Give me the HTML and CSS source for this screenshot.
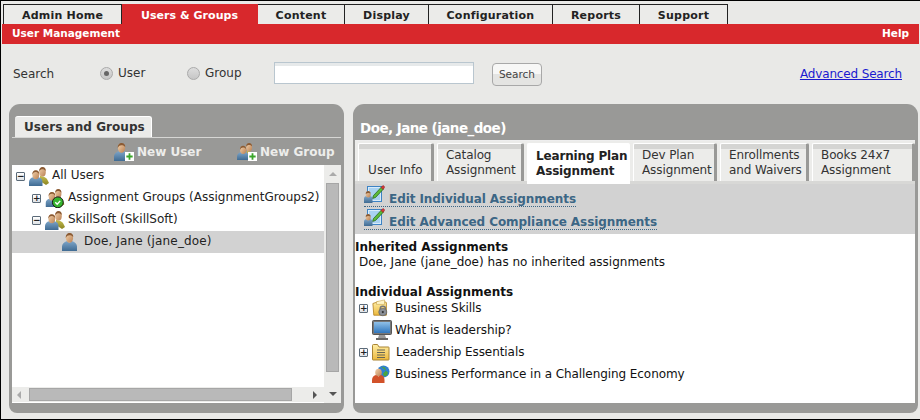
FILE: index.html
```html
<!DOCTYPE html>
<html lang="en">
<head>
<meta charset="utf-8">
<title>User Management</title>
<link rel="stylesheet" href="styles.css">
</head>
<body>
<svg class="defs" width="0" height="0" aria-hidden="true">
  <defs>
    <linearGradient id="skin" x1="0" y1="0" x2="1" y2="1"><stop offset="0" stop-color="#f3d3ad"/><stop offset="1" stop-color="#b97f52"/></linearGradient>
    <linearGradient id="blue" x1="0" y1="0" x2="0" y2="1"><stop offset="0" stop-color="#7fa6c9"/><stop offset="1" stop-color="#3f6b93"/></linearGradient>
    <linearGradient id="olive" x1="0" y1="0" x2="0" y2="1"><stop offset="0" stop-color="#c5bd50"/><stop offset="1" stop-color="#8b8420"/></linearGradient>
    <linearGradient id="folder" x1="0" y1="0" x2="0" y2="1"><stop offset="0" stop-color="#ffeea6"/><stop offset="1" stop-color="#edb93c"/></linearGradient>
    <linearGradient id="screen" x1="0" y1="0" x2="0" y2="1"><stop offset="0" stop-color="#8fc0e8"/><stop offset="1" stop-color="#2f76bd"/></linearGradient>
    <symbol id="person" viewBox="0 0 16 18">
      <path d="M5 8c-3 1-5 3-5 5.500v4.500h15v-4.500c0-2.500-2-4.500-5-5.500l-2.500 2z" fill="url(#blue)"/>
      <ellipse cx="7.500" cy="5" rx="3.600" ry="4.800" fill="url(#skin)"/>
      <path d="M3.800 5c-.3-3 1.500-5 3.900-5 2.300 0 3.800 1.700 3.500 4-1-1.300-2.500-1.700-4-1.700-1 0-2.700.7-3.400 2.700z" fill="#8a5a33"/>
    </symbol>
    <symbol id="people" viewBox="0 0 20 19">
      <path d="M11 9c2 0 7 1 8 5l1 2-3 2-6-4z" fill="url(#olive)"/>
      <ellipse cx="13.500" cy="5" rx="3.300" ry="4.500" fill="url(#skin)"/>
      <path d="M10 4.500c0-3 1.500-4.500 3.500-4.500s3.500 1.500 3.200 4c-1-1.300-2-1.800-3.200-1.800-1 0-2.800.5-3.500 2.300z" fill="#8a5a33"/>
      <path d="M4.500 10c-3 .8-4.500 3-4.500 5v4h13.500v-4c0-2.500-1.500-4.200-4.500-5l-2.200 2z" fill="url(#blue)"/>
      <ellipse cx="6.800" cy="7.800" rx="3.400" ry="4.400" fill="url(#skin)"/>
      <path d="M3.300 7.800c-.3-2.800 1.300-4.600 3.500-4.600 2.100 0 3.500 1.600 3.300 3.700-1-1.400-2.300-1.800-3.600-1.800-1 0-2.500.7-3.200 2.700z" fill="#8a5a33"/>
    </symbol>
    <symbol id="editperson" viewBox="0 0 21 20">
      <rect x="3.500" y="2.500" width="14" height="15" fill="#d7ebfa" stroke="#3d83c4"/>
      <rect x="5" y="4" width="11" height="12" fill="#a9d2f2"/>
      <path d="M9.500 11.500l8-8.500 2 2-8 8.500-3 1z" fill="#5dbb3a" stroke="#1e5c12" stroke-width=".7"/>
      <path d="M17 3.500l1.300-1.500q.9-.8 1.700 0l.3.4q.6.7-.1 1.500l-1.200 1.600z" fill="#d63b3b" stroke="#700" stroke-width=".4"/>
      <path d="M2 12c-1.200.5-2 1.500-2 2.700v4.300h8.500v-4.300c0-1.200-.8-2.200-2-2.700l-2 1.200z" fill="url(#blue)"/>
      <ellipse cx="4.200" cy="10.500" rx="2.500" ry="3" fill="url(#skin)"/>
      <path d="M1.700 10c0-2 1-3 2.500-3s2.500 1 2.400 2.600c-1.500-.8-3-.8-4.900.4z" fill="#8a5a33"/>
    </symbol>
    <symbol id="plusbadge" viewBox="0 0 10 10">
      <rect width="10" height="10" fill="#fff"/>
      <path d="M4 1.500h2v2.500h2.500v2h-2.500v2.500h-2v-2.500h-2.500v-2h2.500z" fill="#3aa52a"/>
    </symbol>
  </defs>
</svg>

<div class="frame">
  <nav class="tabs">
    <a class="tab w-home">Admin Home</a>
    <a class="tab active w-users">Users &amp; Groups</a>
    <a class="tab w-content">Content</a>
    <a class="tab w-display">Display</a>
    <a class="tab w-config">Configuration</a>
    <a class="tab w-reports">Reports</a>
    <a class="tab w-support">Support</a>
  </nav>
  <div class="redbar"><span>User Management</span><span>Help</span></div>

  <form class="search">
    <span class="search-label">Search</span>
    <span class="radio-item r-user"><span class="radio checked"></span>User</span>
    <span class="radio-item r-group"><span class="radio"></span>Group</span>
    <span class="search-input"></span>
    <span class="search-btn">Search</span>
    <a class="advanced">Advanced Search</a>
  </form>

  <div class="panels">
    <section class="panel left">
      <div class="left-head"><div class="left-tab">Users and Groups</div></div>
      <div class="tools">
        <span class="tool t-user"><span class="icon-wrap"><svg class="ic20" viewBox="0 0 20 18"><use href="#person" width="16" height="18"/><use href="#plusbadge" x="11" y="9" width="9" height="9"/></svg></span>New User</span>
        <span class="tool t-group"><span class="icon-wrap"><svg class="ic20" viewBox="0 0 20 18"><use href="#people" width="18" height="17"/><use href="#plusbadge" x="11" y="9" width="9" height="9"/></svg></span>New Group</span>
      </div>
      <div class="tree-box">
        <div class="tree-main">
          <div class="tree">
            <div class="node"><span class="exp">−</span><svg class="nic"><use href="#people"/></svg><span class="nlabel">All Users</span></div>
            <div class="node lvl1"><span class="exp">+</span><svg class="nic" viewBox="0 0 20 20"><use href="#people" width="20" height="19"/><circle cx="13" cy="14" r="5.700" fill="#35b52f" stroke="#111"/><path d="M10.300 14l2 2 3.200-3.500" fill="none" stroke="#fff" stroke-width="1.500"/></svg><span class="nlabel">Assignment Groups (AssignmentGroups2)</span></div>
            <div class="node lvl1"><span class="exp">−</span><svg class="nic"><use href="#people"/></svg><span class="nlabel">SkillSoft (SkillSoft)</span></div>
            <div class="node selected"><svg class="nic-p"><use href="#person"/></svg><span class="nlabel">Doe, Jane (jane_doe)</span></div>
          </div>
          <div class="hbar">
            <span class="arr arr-l"></span>
            <span class="hthumb"></span>
            <span class="arr arr-r"></span>
          </div>
        </div>
        <div class="vbar">
          <span class="arr arr-u"></span>
          <span class="vthumb"></span>
          <span class="arr arr-d"></span>
        </div>
      </div>
    </section>

    <section class="panel right">
      <h2 class="title">Doe, Jane (jane_doe)</h2>
      <div class="inner">
        <div class="subtabs">
          <div class="subtab st1"><span>User Info</span></div>
          <div class="subtab st2"><span>Catalog<br>Assignment</span></div>
          <div class="subtab on st3"><span>Learning Plan<br>Assignment</span></div>
          <div class="subtab st4"><span>Dev Plan<br>Assignment</span></div>
          <div class="subtab st5"><span>Enrollments<br>and Waivers</span></div>
          <div class="subtab st6"><span>Books 24x7<br>Assignment</span></div>
        </div>
        <div class="actions">
          <a class="action"><svg class="edit"><use href="#editperson"/></svg><span>Edit Individual Assignments</span></a>
          <a class="action"><svg class="edit"><use href="#editperson"/></svg><span>Edit Advanced Compliance Assignments</span></a>
        </div>
        <div class="content">
          <h3>Inherited Assignments</h3>
          <p>Doe, Jane (jane_doe) has no inherited assignments</p>
          <h3 class="h-ind">Individual Assignments</h3>
          <ul class="items">
            <li><span class="exp">+</span><svg class="item-ic" viewBox="0 0 20 20"><path d="M1 5l6-2v2h6l1-2 2 1v14H2z" fill="url(#folder)" stroke="#b98a2c"/><path d="M5 3l9-2v5H5z" fill="#fff4c6" stroke="#c09a40" stroke-width=".6"/><path d="M9 11a3 3 0 0 1 6 0" fill="none" stroke="#777" stroke-width="1.500"/><rect x="7.500" y="10.500" width="9" height="8" rx="4" fill="#8a8f96" stroke="#555" stroke-width=".7"/><circle cx="12" cy="14.500" r="1.200" fill="#333"/></svg><span>Business Skills</span></li>
            <li class="noexp"><svg class="item-ic wide" viewBox="0 0 20 20"><rect x=".5" y=".5" width="19" height="14" rx="1" fill="#777" stroke="#555"/><rect x="2" y="2" width="16" height="11" fill="url(#screen)"/><path d="M7 15h6l1 3H6z" fill="#999"/><rect x="4" y="18" width="12" height="2" fill="#666"/></svg><span>What is leadership?</span></li>
            <li class="lead"><span class="exp">+</span><svg class="item-ic folder" viewBox="0 0 18 17"><path d="M.5 3.500V2q0-1 1-1h4l1.500 2.500h9.500q.5 0 .5.5v12q0 .5-.5.5h-15.500q-.5 0-.5-.5z" fill="url(#folder)" stroke="#a98433"/><path d="M5 6.500h8M5 9h8M5 11.500h8M5 14h8" stroke="#665" stroke-width="1"/></svg><span>Leadership Essentials</span></li>
            <li class="noexp"><svg class="item-ic" viewBox="0 0 18 18"><circle cx="11.500" cy="6.500" r="6" fill="#2f7fd1"/><path d="M9 1.500l4 1 1 3-3 3 1 3 3-1 1-3z" fill="#4ba53e"/><ellipse cx="6.500" cy="7.500" rx="3.300" ry="3.800" fill="url(#skin)"/><path d="M0 18v-3c0-3 2-4.500 4-5l2.500 1.500L9 10c2 .5 3.500 2 3.500 5v3z" fill="#d2522a"/></svg><span>Business Performance in a Challenging Economy</span></li>
          </ul>
        </div>
      </div>
    </section>
  </div>
</div>
</body>
</html>
```

FILE: styles.css
```css
html, body { margin: 0; padding: 0; }
body { width: 920px; height: 420px; overflow: hidden; background: #fff; font-family: "DejaVu Sans", Verdana, sans-serif; color: #111; }
.defs { position: absolute; }
.frame {
  box-sizing: border-box; width: 920px; height: 420px;
  background: #e9e9e7;
  border-top: 1px solid #000; border-left: 1px solid #000; border-bottom: 1px solid #000;
  padding: 3px 1px 0 1px;
  display: flex; flex-direction: column;
}
.tabs { display: flex; height: 20px; padding-left: 1px; }
.tab {
  box-sizing: border-box; height: 20px;
  border: 1px solid #222; border-bottom: 0; border-left: 0;
  background: #ebebe9; color: #222;
  font-weight: 700; font-size: 11px; line-height: 21px; text-align: center; letter-spacing: .22px;
}
.tab:first-child { border-left: 1px solid #222; }
.tab.active { background: #d8282c; color: #fff; border-color: #d8282c; letter-spacing: .05px; }
.w-home { width: 119px; }
.w-users { width: 136px; }
.w-content { width: 87px; }
.w-display { width: 84px; }
.w-config { width: 124px; }
.w-reports { width: 87px; }
.w-support { width: 88px; }
.redbar {
  height: 20px; background: #d8282c; color: #fff; font-weight: 700; font-size: 10.500px; line-height: 19px;
  display: flex; justify-content: space-between; padding: 0 10px;
}
.search { height: 60px; display: flex; align-items: center; font-size: 12px; color: #333; }
.search-label { margin-left: 11px; width: 87px; }
.radio-item { display: flex; align-items: center; gap: 5px; }
.r-user { width: 87px; margin-top: -2px; }
.r-group { width: 87px; margin-top: -2px; }
.radio { width: 11px; height: 11px; border-radius: 50%; border: 1px solid #aaa; background: linear-gradient(#ddd, #c6c6c6); position: relative; }
.radio.checked::after { content: ""; position: absolute; left: 3px; top: 3px; width: 5px; height: 5px; border-radius: 50%; background: #666; }
.search-input { box-sizing: border-box; width: 200px; height: 22px; margin-top: -2px; background: linear-gradient(#e6e9ea 3px, #fff 3px); border: 1px solid #b9c6cf; }
.search-btn { box-sizing: border-box; margin-left: 18px; width: 50px; height: 23px; border: 1px solid #a8a8a8; border-radius: 4px; background: linear-gradient(#f7f7f6 50%, #e4e4e2 50%); font-size: 10.500px; line-height: 21px; text-align: center; color: #444; }
.advanced { margin-left: auto; margin-right: 17px; color: #1a1ad0; text-decoration: underline; letter-spacing: -.15px; }
.panels { display: flex; gap: 9px; padding-left: 7px; height: 309px; }
.panel { background: #999997; border-radius: 11px 11px 8px 8px; box-sizing: border-box; height: 309px; display: flex; flex-direction: column; }
.left { width: 335px; padding: 0 3px 10px 3px; }
.left-head { height: 34px; box-sizing: border-box; padding: 12px 0 0 3px; border-bottom: 1px solid #d6d6d4; flex: none; }
.left-tab { width: 137px; height: 21px; box-sizing: border-box; background: #ebebe9; border-radius: 3px 3px 0 0; border-right: 1px solid #fff; border-top: 1px solid #fff; font-weight: 700; font-size: 12px; line-height: 20px; padding-left: 9px; color: #333; letter-spacing: .05px; }
.tools { height: 27px; flex: none; display: flex; align-items: center; color: #ededeb; font-weight: 700; font-size: 12px; }
.tool { display: flex; align-items: center; }
.t-user { margin-left: 102px; width: 123px; }
.icon-wrap { display: block; width: 23px; height: 18px; }
.ic20 { width: 20px; height: 18px; display: block; }
.tree-box { flex: 1; min-height: 0; background: #fff; display: flex; }
.tree-main { width: 312px; display: flex; flex-direction: column; }
.tree { flex: 1; font-size: 12px; color: #222; }
.node { height: 22px; display: flex; align-items: center; padding-left: 4px; box-sizing: border-box; }
.nlabel { margin-top: -2px; }
.lvl1 { padding-left: 20px; }
.selected { background: #d2d2d2; padding-left: 50px; }
.selected .nlabel { letter-spacing: .15px; }
.exp { box-sizing: border-box; flex: none; width: 9px; height: 9px; border: 1px solid #5b6a78; border-radius: 1px; background: linear-gradient(#fff, #dfe3e6); font-size: 9px; line-height: 6px; text-align: center; color: #222; font-weight: 700; margin-right: 4px; }
.nic { width: 20px; height: 19px; flex: none; margin-right: 3px; }
.nic-p { width: 16px; height: 18px; flex: none; margin-right: 6px; }
.hbar { height: 15px; background: #ececea; display: flex; align-items: center; margin-bottom: 1px; }
.hthumb { box-sizing: border-box; margin-left: 8px; width: 263px; height: 13px; background: #b9b9b9; border: 1px solid #a6a6a6; }
.vbar { width: 17px; box-sizing: border-box; background: #ececea; display: flex; flex-direction: column; align-items: center; padding-bottom: 7px; }
.vthumb { box-sizing: border-box; width: 13px; height: 189px; margin-top: 7px; flex: none; background: #b9b9b9; border: 1px solid #a6a6a6; }
.arr { width: 0; height: 0; display: block; flex: none; }
.arr-l { margin-left: 5px; border-top: 4px solid transparent; border-bottom: 4px solid transparent; border-right: 4px solid #aaa; }
.arr-r { margin-left: 21px; border-top: 4px solid transparent; border-bottom: 4px solid transparent; border-left: 4px solid #555; }
.arr-u { margin-top: 7px; border-left: 4px solid transparent; border-right: 4px solid transparent; border-bottom: 4px solid #aaa; }
.arr-d { margin-top: auto; border-left: 4px solid transparent; border-right: 4px solid transparent; border-top: 4px solid #555; }
.right { width: 565px; padding: 0 3px 10px 2px; }
.title { margin: 0; height: 37px; box-sizing: border-box; flex: none; padding: 16px 0 0 5px; font-size: 13.500px; line-height: 17px; font-weight: 700; color: #fff; letter-spacing: -.55px; border-bottom: 1px solid #eee; }
.inner { flex: 1; min-height: 0; background: #fff; display: flex; flex-direction: column; }
.subtabs { height: 43px; flex: none; box-sizing: border-box; background: #ececea; padding: 2px 0 0 3px; display: flex; gap: 3px; border-bottom: 3px solid #d8d8d6; }
.subtab { box-sizing: border-box; height: 38px; background: linear-gradient(#d5d5d3 5px, #ececea 5px); border: 1px solid #fff; border-bottom: 0; border-right: 3px solid #999997; border-radius: 2px 2px 0 0; font-size: 12px; line-height: 15px; color: #333; display: flex; align-items: flex-end; padding: 0 0 3px 8px; letter-spacing: -.1px; white-space: nowrap; }
.subtab.on { background: #fff; border-color: #fff; border-right: 0; color: #222; font-weight: 700; height: 41px; margin-bottom: -3px; padding-bottom: 5px; letter-spacing: -.15px; }
.st1 { width: 76px; padding-left: 9px; letter-spacing: .1px; }
.st2 { width: 87px; }
.st3 { width: 103px; }
.st4 { width: 84px; }
.st5 { width: 89px; }
.st6 { width: 103px; }
.actions { height: 50px; flex: none; background: #d2d2d2; box-sizing: border-box; font-weight: 700; font-size: 12px; color: #3c6685; display: flex; flex-direction: column; }
.action { display: flex; align-items: flex-end; height: 23px; box-sizing: border-box; margin-left: 9px; width: fit-content; border-bottom: 1px dotted #3c6685; letter-spacing: -.07px; }
.action span { line-height: 13px; }
.edit { width: 21px; height: 20px; flex: none; align-self: flex-start; margin-right: 4px; }
.content { font-size: 12px; color: #111; flex: 1; }
.content h3 { margin: 0; font-size: 12px; font-weight: 700; line-height: 15px; padding-top: 6px; color: #111; }
.content p { margin: 0; padding-left: 4px; line-height: 15px; }
.content .h-ind { padding-top: 15px; }
.items { list-style: none; margin: -3px 0 0; padding: 0; letter-spacing: -.07px; }
.items li { height: 22px; display: flex; align-items: center; padding-left: 4px; }
.items .exp { margin-right: 4px; }
.items li.noexp { padding-left: 17px; }
.item-ic { width: 18px; height: 18px; flex: none; margin-right: 5px; }
.item-ic.wide { width: 20px; height: 20px; margin-right: 3px; }
.item-ic.folder { margin-right: 6px; }
```
